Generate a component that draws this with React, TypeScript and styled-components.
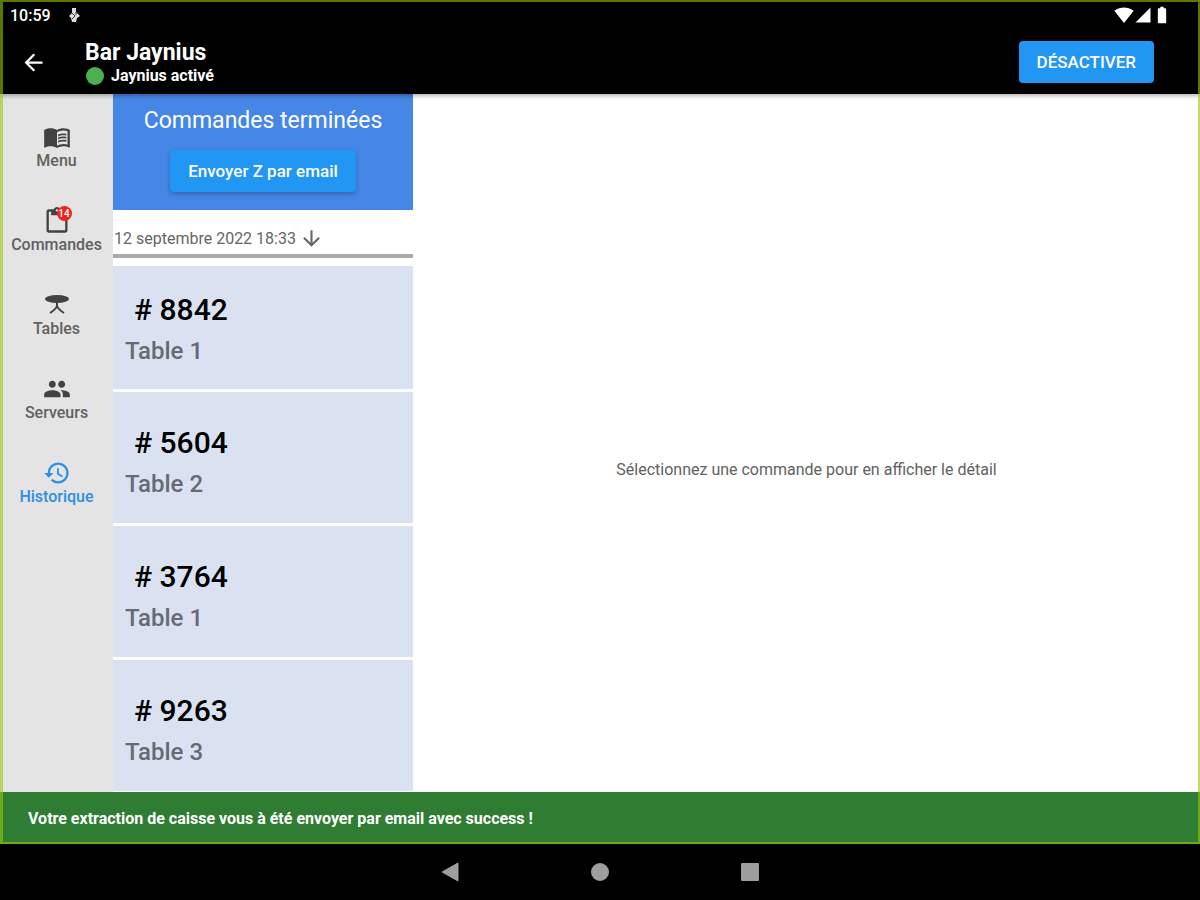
import React from "react";
import styled, { createGlobalStyle } from "styled-components";
import {
  MdArrowBack,
  MdArrowDownward,
  MdBatteryFull,
  MdContentPaste,
  MdHistory,
  MdMenuBook,
  MdPeople,
  MdSignalCellular4Bar,
  MdSignalWifi4Bar,
} from "react-icons/md";

const GlobalStyle = createGlobalStyle`
  * { box-sizing: border-box; }
  body {
    margin: 0;
    background: #000;
    font-family: Roboto, "Liberation Sans", sans-serif;
  }
  button { font: inherit; border: 0; padding: 0; cursor: pointer; }
`;

const Device = styled.div`
  display: flex;
  flex-direction: column;
  height: 100vh;
  min-height: 600px;
`;

const AppFrame = styled.div`
  position: relative;
  flex: 1;
  min-height: 0;
  display: flex;
  flex-direction: column;
  background: #fff;

  &::after {
    content: "";
    position: absolute;
    inset: 0;
    border: solid rgba(153, 200, 0, 0.6);
    border-width: 2px 2px 2px 3px;
    pointer-events: none;
    z-index: 3;
  }
`;

const StatusBar = styled.div`
  display: flex;
  align-items: center;
  gap: 16px;
  height: 30px;
  padding: 0 28px 0 10px;
  background: #000;
  color: #fff;
`;

const Clock = styled.time`
  font-size: 16px;
  font-weight: 500;
`;

const StatusIcons = styled.div`
  display: flex;
  align-items: center;
  margin-left: auto;
`;

const AppBar = styled.header`
  position: relative;
  z-index: 1;
  display: flex;
  align-items: center;
  height: 64px;
  padding: 0 46px 0 20px;
  background: #000;
  color: #fff;
  box-shadow: 0 2px 4px rgba(0, 0, 0, 0.3);
`;

const BackButton = styled.button`
  display: flex;
  background: none;
  color: #fff;
  margin-right: 38px;
`;

const Heading = styled.div`
  flex: 1;
`;

const Title = styled.h1`
  margin: 0;
  font-size: 23px;
  line-height: 27px;
  font-weight: 700;
`;

const Activity = styled.div`
  display: flex;
  align-items: center;
  gap: 7px;
  font-size: 16px;
  line-height: 20px;
  font-weight: 700;
`;

const Dot = styled.span`
  width: 18px;
  height: 18px;
  margin-left: 1px;
  border-radius: 50%;
  background: #4caf50;
`;

const ActionButton = styled.button<{ $raised?: boolean }>`
  height: 42px;
  padding: 0 18px;
  border-radius: 4px;
  background: #2196f3;
  color: #fff;
  font-size: 17px;
  font-weight: 500;
  box-shadow: ${(p) => (p.$raised ? "0 2px 4px rgba(0, 0, 0, 0.25)" : "none")};
`;

const Body = styled.div`
  flex: 1;
  min-height: 0;
  display: flex;
`;

const Rail = styled.nav`
  flex: 0 0 113px;
  display: flex;
  flex-direction: column;
  padding-top: 29px;
  background: #e4e4e4;
`;

const RailLink = styled.a<{ $active?: boolean }>`
  display: flex;
  flex-direction: column;
  align-items: center;
  height: 84px;
  color: ${(p) => (p.$active ? "#2b8fe8" : "#616161")};
  font-size: 16px;
  line-height: 20px;
  font-weight: 500;
  text-decoration: none;

  svg { color: ${(p) => (p.$active ? "#2b8fe8" : "#424242")}; }
`;

const IconHolder = styled.span`
  position: relative;
  display: flex;
`;

const Badge = styled.span`
  position: absolute;
  top: -1px;
  right: -1px;
  width: 15px;
  height: 15px;
  border-radius: 50%;
  background: #f5221b;
  color: #fff;
  font-size: 10px;
  line-height: 15px;
  text-align: center;
`;

const Orders = styled.section`
  flex: 0 0 300px;
  display: flex;
  flex-direction: column;
  min-height: 0;
`;

const OrdersHeader = styled.div`
  display: flex;
  flex-direction: column;
  align-items: center;
  gap: 14px;
  height: 116px;
  padding-top: 12px;
  background: #4686e6;
`;

const OrdersTitle = styled.h2`
  margin: 0;
  color: #fff;
  font-size: 23px;
  line-height: 30px;
  font-weight: 400;
`;

const SortRow = styled.button`
  display: flex;
  align-items: center;
  gap: 3px;
  height: 48px;
  margin-bottom: 8px;
  padding: 12px 0 0 1px;
  border-bottom: 4px solid #a9a9a9;
  background: #fff;
  color: #666;
  font-size: 16px;
`;

const OrderList = styled.ul`
  flex: 1;
  min-height: 0;
  margin: 0;
  padding: 0;
  overflow: hidden;
  list-style: none;
`;

const OrderCard = styled.li`
  height: 134px;
  padding: 33px 12px 0;
  border-bottom: 3px solid #fff;
  background: #dae2f1;

  &:first-child {
    height: 126px;
    padding-top: 26px;
  }
`;

const OrderNumber = styled.div`
  padding-left: 9px;
  color: #000;
  font-size: 30px;
  line-height: 36px;
  font-weight: 500;
`;

const OrderTable = styled.div`
  margin-top: 8px;
  color: #666a73;
  font-size: 24px;
  line-height: 30px;
  font-weight: 500;
`;

const Detail = styled.main`
  flex: 1;
  display: flex;
  align-items: center;
  justify-content: center;
  padding-top: 52px;
  color: #616161;
  font-size: 16px;
`;

const Snackbar = styled.div`
  height: 52px;
  padding: 0 28px;
  background: #2e7d32;
  color: #fff;
  font-size: 16px;
  line-height: 54px;
  font-weight: 700;
`;

const SystemNav = styled.div`
  display: flex;
  align-items: center;
  justify-content: center;
  gap: 130px;
  height: 56px;
  background: #000;
`;

const SystemButton = styled.button`
  display: flex;
  background: none;
  color: #9e9e9e;
`;

const TableIcon = () => (
  <svg width="28" height="28" viewBox="0 0 28 28" fill="none">
    <ellipse cx="14" cy="8" rx="12" ry="4" fill="currentColor" />
    <path d="M14 11v5M14 15c-1 3-4 5-7 7M14 15c1 3 4 5 7 7" stroke="currentColor" strokeWidth="2" />
  </svg>
);

const StatusGlyph = () => (
  <svg width="14" height="18" viewBox="0 0 14 18" fill="none">
    <path d="M5 2h4v4l4 4-3 2-1 4H5l-1-4-2-2 3-3z" fill="#ddd" />
    <path d="m5 7 3 3-3 3M9 6v3" stroke="#333" strokeWidth="1" />
  </svg>
);

const sections = [
  { label: "Menu", icon: <MdMenuBook size={28} /> },
  { label: "Commandes", icon: <MdContentPaste size={28} />, badge: "14" },
  { label: "Tables", icon: <TableIcon /> },
  { label: "Serveurs", icon: <MdPeople size={28} /> },
  { label: "Historique", icon: <MdHistory size={28} />, active: true },
];

const orders = [
  { number: 8842, table: 1 },
  { number: 5604, table: 2 },
  { number: 3764, table: 1 },
  { number: 9263, table: 3 },
];

export default function App() {
  return (
    <Device>
      <GlobalStyle />
      <AppFrame>
        <StatusBar>
          <Clock>10:59</Clock>
          <StatusGlyph />
          <StatusIcons>
            <MdSignalWifi4Bar size={20} />
            <MdSignalCellular4Bar size={18} />
            <MdBatteryFull size={20} />
          </StatusIcons>
        </StatusBar>
        <AppBar>
          <BackButton aria-label="Retour">
            <MdArrowBack size={27} />
          </BackButton>
          <Heading>
            <Title>Bar Jaynius</Title>
            <Activity>
              <Dot />
              Jaynius activé
            </Activity>
          </Heading>
          <ActionButton>DÉSACTIVER</ActionButton>
        </AppBar>
        <Body>
          <Rail>
            {sections.map((s) => (
              <RailLink key={s.label} href="#" $active={s.active}>
                <IconHolder>
                  {s.icon}
                  {s.badge && <Badge>{s.badge}</Badge>}
                </IconHolder>
                {s.label}
              </RailLink>
            ))}
          </Rail>
          <Orders>
            <OrdersHeader>
              <OrdersTitle>Commandes terminées</OrdersTitle>
              <ActionButton $raised>Envoyer Z par email</ActionButton>
            </OrdersHeader>
            <SortRow>
              12 septembre 2022 18:33
              <MdArrowDownward size={25} />
            </SortRow>
            <OrderList>
              {orders.map((o) => (
                <OrderCard key={o.number}>
                  <OrderNumber># {o.number}</OrderNumber>
                  <OrderTable>Table {o.table}</OrderTable>
                </OrderCard>
              ))}
            </OrderList>
          </Orders>
          <Detail>Sélectionnez une commande pour en afficher le détail</Detail>
        </Body>
        <Snackbar role="status">
          Votre extraction de caisse vous à été envoyer par email avec success !
        </Snackbar>
      </AppFrame>
      <SystemNav>
        <SystemButton aria-label="Précédent">
          <svg width="20" height="20" viewBox="0 0 20 20">
            <path d="M2 10 18 1v18z" fill="currentColor" stroke="currentColor" strokeLinejoin="round" />
          </svg>
        </SystemButton>
        <SystemButton aria-label="Accueil">
          <svg width="20" height="20" viewBox="0 0 20 20">
            <circle cx="10" cy="10" r="9" fill="currentColor" />
          </svg>
        </SystemButton>
        <SystemButton aria-label="Applications récentes">
          <svg width="20" height="20" viewBox="0 0 20 20">
            <rect x="1" y="1" width="18" height="18" rx="1" fill="currentColor" />
          </svg>
        </SystemButton>
      </SystemNav>
    </Device>
  );
}
